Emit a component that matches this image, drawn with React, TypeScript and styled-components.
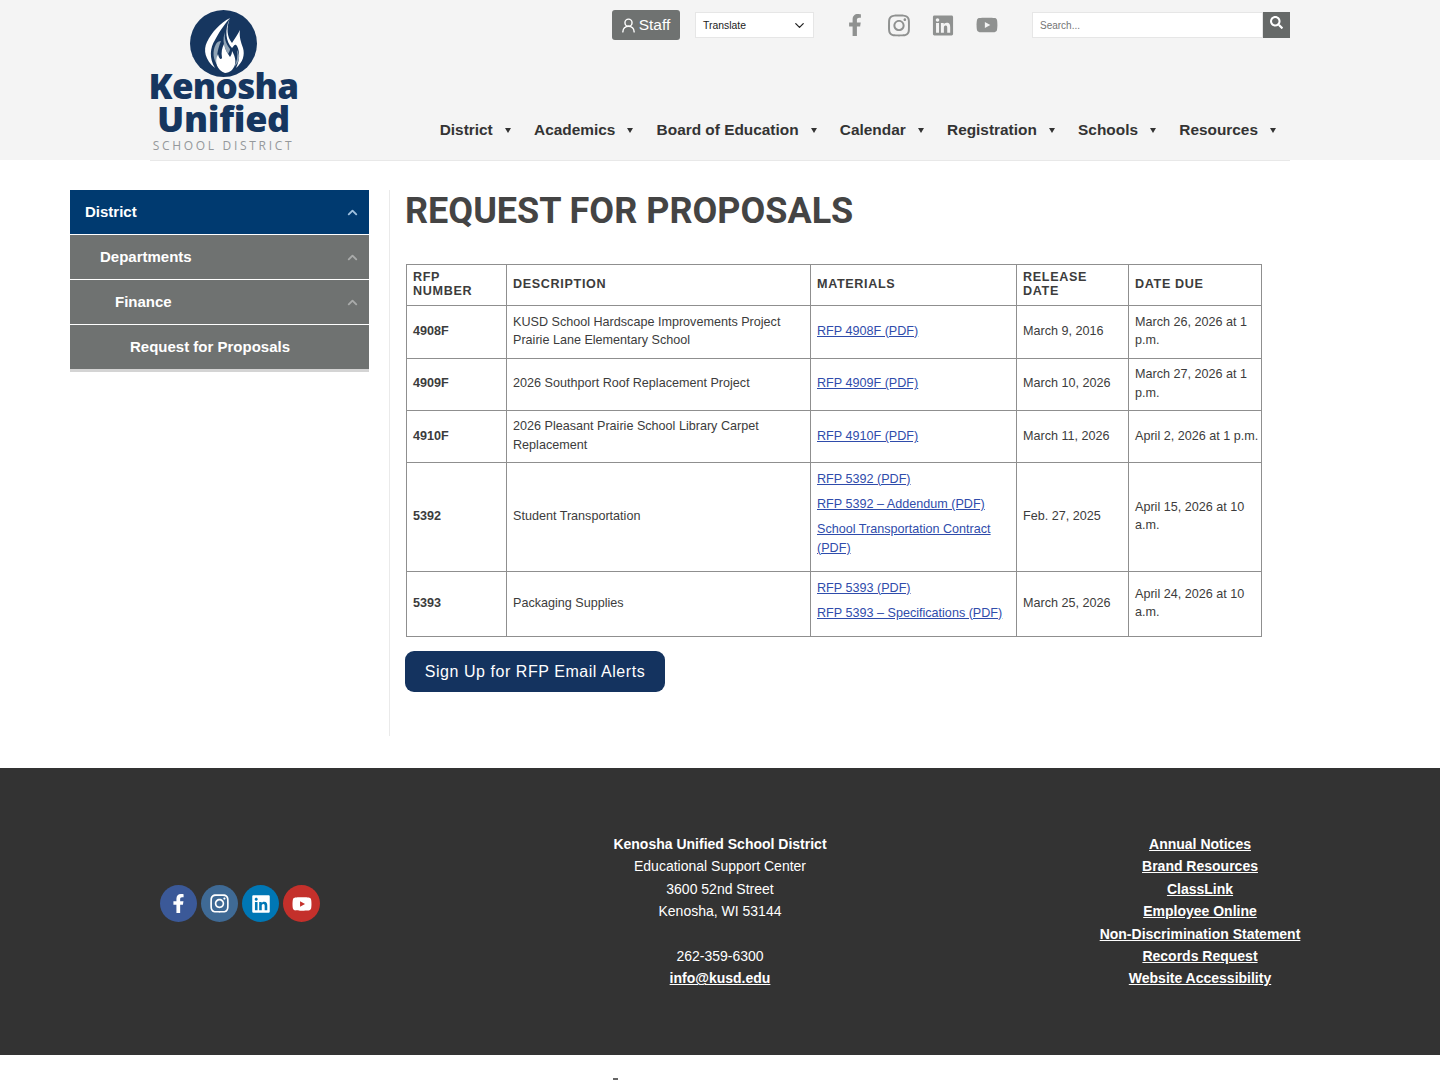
import React from "react";
import styled, {createGlobalStyle} from "styled-components";
import {FaFacebookF, FaInstagram, FaLinkedin, FaSearch, FaYoutube} from "react-icons/fa";
import {LuChevronDown, LuChevronUp, LuUserRound} from "react-icons/lu";

const GlobalStyle = createGlobalStyle`
    html, body {
        margin: 0;
        padding: 0;
        background: #fff;
        color: #333;
        font-family: "Liberation Sans", Arial, sans-serif;
    }
`;

const Page = styled.div`
    width: 1440px;
    height: 1080px;
    overflow: hidden;
`;

/* header */
const HeaderBand = styled.header`
    background: #f4f4f4;
    height: 160px;
`;

const HeaderInner = styled.div`
    width: 1140px;
    height: 161px;
    margin: 0 auto;
    display: flex;
    box-sizing: border-box;
    border-bottom: 1px solid #e8e8e8;
`;

const Logo = styled.a`
    width: 147px;
    flex: none;
    display: flex;
    flex-direction: column;
    align-items: center;
    padding-top: 10px;
    color: #16365f;
`;

const LogoWord = styled.span<{$size: number; $first?: boolean}>`
    font-family: "Open Sans", sans-serif;
    font-weight: 800;
    font-size: ${(p) => p.$size}px;
    line-height: 33px;
    letter-spacing: ${(p) => (p.$first ? "-0.7px" : "-0.3px")};
    white-space: nowrap;
    margin-top: ${(p) => (p.$first ? "-8px" : "0")};
`;

const LogoTag = styled.span`
    font-family: "Open Sans", sans-serif;
    font-size: 12px;
    line-height: 14px;
    letter-spacing: 2.7px;
    color: #94989b;
    white-space: nowrap;
    margin-top: 4px;
`;

const HeaderRight = styled.div`
    flex: 1;
    display: flex;
    flex-direction: column;
`;

const TopRow = styled.div`
    height: 30px;
    margin-top: 10px;
    display: flex;
    align-items: center;
    justify-content: flex-end;
`;

const StaffButton = styled.a`
    width: 68px;
    height: 30px;
    box-sizing: border-box;
    border-radius: 3px;
    background: #6f7271;
    color: #fff;
    font-size: 15.5px;
    display: flex;
    align-items: center;
    justify-content: center;
    gap: 2px;
    padding-right: 2px;
`;

const TranslateSelect = styled.div`
    width: 119px;
    height: 26px;
    margin-left: 15px;
    box-sizing: border-box;
    padding: 0 6px 0 7px;
    background: #fff;
    border: 1px solid #e6e6e6;
    font-size: 10.4px;
    color: #222;
    display: flex;
    align-items: center;
    justify-content: space-between;
`;

const SocialRow = styled.div`
    width: 218px;
    padding-right: 4px;
    box-sizing: border-box;
    display: flex;
    align-items: center;
    justify-content: center;
    gap: 22px;
    color: #8f9190;
`;

const SocialSlot = styled.span`
    width: 22px;
    display: flex;
    justify-content: center;
`;

const SearchBox = styled.div`
    width: 258px;
    height: 26px;
    display: flex;
    background: #fff;
`;

const SearchField = styled.div`
    flex: 1;
    box-sizing: border-box;
    border: 1px solid #e6e6e6;
    padding-left: 7px;
    font-size: 10px;
    color: #757575;
    display: flex;
    align-items: center;
`;

const SearchButton = styled.span`
    width: 27px;
    background: #666968;
    color: #fff;
    display: flex;
    justify-content: center;
    padding-top: 4px;
    box-sizing: border-box;
`;

const Nav = styled.nav`
    margin-top: 80px;
    display: flex;
    justify-content: flex-end;
    padding-right: 14px;
    gap: 23.3px;
`;

const NavItem = styled.a`
    font-size: 15.4px;
    line-height: 20px;
    font-weight: 700;
    color: #333;
    display: flex;
    align-items: center;
    gap: 12px;
    &::after {
        content: "";
        border-left: 3px solid transparent;
        border-right: 3px solid transparent;
        border-top: 5px solid #333;
    }
`;

/* main */
const Main = styled.main`
    height: 608px;
    box-sizing: border-box;
    padding: 30px 0 0 70px;
    display: flex;
`;

const Sidebar = styled.aside`
    width: 299px;
    flex: none;
    align-self: flex-start;
    border-bottom: 3px solid #d4d4d4;
`;

const SideItem = styled.a<{$level: number; $active?: boolean}>`
    height: 44px;
    box-sizing: border-box;
    padding: 0 9px 2px ${(p) => 15 + p.$level * 15}px;
    background: ${(p) => (p.$active ? "#003a70" : "#6f7271")};
    color: #fff;
    font-size: 15px;
    font-weight: 700;
    display: flex;
    align-items: center;
    justify-content: space-between;
    & + & {
        margin-top: 1px;
    }
    svg {
        color: ${(p) => (p.$active ? "#9fc0de" : "#a9abaa")};
        position: relative;
        top: 1px;
    }
`;

const Content = styled.div`
    margin-left: 20px;
    width: 900px;
    height: 546px;
    box-sizing: border-box;
    border-left: 1px solid #eaeaea;
    padding: 1px 0 0 15px;
`;

const Title = styled.h1`
    margin: 0;
    font-family: Roboto, sans-serif;
    font-size: 36px;
    line-height: 40px;
    font-weight: 700;
    color: #444;
`;

const Table = styled.table`
    margin: 33px 0 0 1px;
    width: 855px;
    table-layout: fixed;
    border-collapse: collapse;
    font-size: 12.6px;
    line-height: 18.5px;
    color: #3c3c3c;

    th, td {
        border: 1px solid #8f8f8f;
        padding: 0 0 2px 6px;
        text-align: left;
        vertical-align: middle;
    }

    th {
        letter-spacing: 0.65px;
        line-height: 14px;
        font-weight: 700;
    }

    a {
        color: #2f4cab;
        text-decoration: underline;
    }
`;

const Row = styled.tr<{$h: number; $low?: boolean}>`
    height: ${(p) => p.$h}px;
    ${(p) => p.$low && "td:not(:nth-child(2)) { padding-bottom: 0; }"}
`;

const LinksCell = styled.td`
    && {
        padding-bottom: 7px;
    }
`;

const LinkLine = styled.div`
    line-height: 19px;
    & + & {
        margin-top: 6px;
    }
`;

const SignUp = styled.a`
    margin-top: 14px;
    width: 260px;
    height: 41px;
    box-sizing: border-box;
    border-radius: 9px;
    background: #14335f;
    color: #fff;
    font-size: 16px;
    letter-spacing: 0.55px;
    display: flex;
    align-items: center;
    justify-content: center;
`;

/* footer */
const Footer = styled.footer`
    height: 287px;
    background: #333;
    color: #fff;
    display: grid;
    grid-template-columns: repeat(3, 480px);
    font-size: 14px;
    line-height: 22.4px;
    text-align: center;
`;

const FooterColumn = styled.div`
    padding-top: 65px;
    a {
        color: #fff;
        font-weight: 700;
        text-decoration: underline;
        display: block;
    }
`;

const FooterSocial = styled.div`
    display: flex;
    align-items: center;
    justify-content: center;
    gap: 4px;
    height: 271px;
`;

const Round = styled.a<{$bg: string}>`
    width: 37px;
    height: 37px;
    border-radius: 50%;
    background: ${(p) => p.$bg};
    display: flex;
    align-items: center;
    justify-content: center;
    color: #fff;
`;

const Strong = styled.div`
    font-weight: 700;
`;

const Gap = styled.div`
    height: 22.4px;
`;

const BottomMark = styled.div`
    width: 5px;
    height: 2px;
    margin: 23px 0 0 613px;
    background: #666;
`;

function Flame() {
    return (
        <svg width="67" height="67" viewBox="0 0 67 67" aria-hidden="true">
            <circle cx="33.5" cy="33.5" r="33.5" fill="#16365f"/>
            <path d="M40 8C30 13 22 22 17 32 13 40 15 50 25 58 19 48 20 38 25 30 28 24 33 16 40 8Z" fill="#fff"/>
            <path d="M40 8C36 18 37 27 42 33 45 28 48 24 50 20 49 27 51 32 53 38 55 45 53 52 46 58 50 50 50 42 47 36 45 33 44 36 42 38 36 32 34 20 40 8Z" fill="#fff"/>
            <path d="M26 34C22 41 23 50 28 56 26 48 27 41 31 31 29 31 27 32 26 34Z" fill="#8fa3b5"/>
            <path d="M35 22C32 30 34 37 38 44 39 42 40 41 40 39 36 34 34 28 35 22Z" fill="#8fa3b5"/>
            <path d="M47 40C48 46 47 52 44 57 49 53 51 46 47 40Z" fill="#8fa3b5"/>
            <path d="M35 63C27 60 24 52 28 44 29 49 31 50 32 48 31 42 32 38 34 34 35 40 38 44 40 47 41 45 42 44 42 41 46 48 47 54 42 60 40 62 37 63 35 63Z" fill="#fff"/>
        </svg>
    );
}

export default function App() {
    return (
        <Page>
            <GlobalStyle/>
            <HeaderBand>
                <HeaderInner>
                    <Logo>
                        <Flame/>
                        <LogoWord $size={35} $first>Kenosha</LogoWord>
                        <LogoWord $size={36}>Unified</LogoWord>
                        <LogoTag>SCHOOL DISTRICT</LogoTag>
                    </Logo>
                    <HeaderRight>
                        <TopRow>
                            <StaffButton><LuUserRound size={17}/>Staff</StaffButton>
                            <TranslateSelect>Translate<LuChevronDown size={15}/></TranslateSelect>
                            <SocialRow>
                                <SocialSlot><FaFacebookF size={22}/></SocialSlot>
                                <SocialSlot><FaInstagram size={25}/></SocialSlot>
                                <SocialSlot><FaLinkedin size={23}/></SocialSlot>
                                <SocialSlot><FaYoutube size={24}/></SocialSlot>
                            </SocialRow>
                            <SearchBox>
                                <SearchField>Search...</SearchField>
                                <SearchButton><FaSearch size={13}/></SearchButton>
                            </SearchBox>
                        </TopRow>
                        <Nav>
                            {["District", "Academics", "Board of Education", "Calendar", "Registration", "Schools", "Resources"].map((n) => (
                                <NavItem key={n}>{n}</NavItem>
                            ))}
                        </Nav>
                    </HeaderRight>
                </HeaderInner>
            </HeaderBand>
            <Main>
                <Sidebar>
                    <SideItem $level={0} $active>District<LuChevronUp size={15} strokeWidth={3}/></SideItem>
                    <SideItem $level={1}>Departments<LuChevronUp size={15} strokeWidth={3}/></SideItem>
                    <SideItem $level={2}>Finance<LuChevronUp size={15} strokeWidth={3}/></SideItem>
                    <SideItem $level={3}>Request for Proposals</SideItem>
                </Sidebar>
                <Content>
                    <Title>REQUEST FOR PROPOSALS</Title>
                    <Table>
                        <colgroup>
                            <col style={{width: 100}}/>
                            <col style={{width: 304}}/>
                            <col style={{width: 206}}/>
                            <col style={{width: 112}}/>
                            <col style={{width: 133}}/>
                        </colgroup>
                        <thead>
                            <Row $h={41}>
                                <th>RFP<br/>NUMBER</th>
                                <th>DESCRIPTION</th>
                                <th>MATERIALS</th>
                                <th>RELEASE<br/>DATE</th>
                                <th>DATE DUE</th>
                            </Row>
                        </thead>
                        <tbody>
                            <Row $h={53}>
                                <td><b>4908F</b></td>
                                <td>KUSD School Hardscape Improvements Project<br/>Prairie Lane Elementary School</td>
                                <td><a>RFP 4908F (PDF)</a></td>
                                <td>March 9, 2016</td>
                                <td>March 26, 2026 at 1 p.m.</td>
                            </Row>
                            <Row $h={52}>
                                <td><b>4909F</b></td>
                                <td>2026 Southport Roof Replacement Project</td>
                                <td><a>RFP 4909F (PDF)</a></td>
                                <td>March 10, 2026</td>
                                <td>March 27, 2026 at 1 p.m.</td>
                            </Row>
                            <Row $h={52} $low>
                                <td><b>4910F</b></td>
                                <td>2026 Pleasant Prairie School Library Carpet Replacement</td>
                                <td><a>RFP 4910F (PDF)</a></td>
                                <td>March 11, 2026</td>
                                <td>April 2, 2026 at 1 p.m.</td>
                            </Row>
                            <Row $h={109}>
                                <td><b>5392</b></td>
                                <td>Student Transportation</td>
                                <LinksCell>
                                    <LinkLine><a>RFP 5392 (PDF)</a></LinkLine>
                                    <LinkLine><a>RFP 5392 – Addendum (PDF)</a></LinkLine>
                                    <LinkLine><a>School Transportation Contract (PDF)</a></LinkLine>
                                </LinksCell>
                                <td>Feb. 27, 2025</td>
                                <td>April 15, 2026 at 10 a.m.</td>
                            </Row>
                            <Row $h={65}>
                                <td><b>5393</b></td>
                                <td>Packaging Supplies</td>
                                <LinksCell>
                                    <LinkLine><a>RFP 5393 (PDF)</a></LinkLine>
                                    <LinkLine><a>RFP 5393 – Specifications (PDF)</a></LinkLine>
                                </LinksCell>
                                <td>March 25, 2026</td>
                                <td>April 24, 2026 at 10 a.m.</td>
                            </Row>
                        </tbody>
                    </Table>
                    <SignUp>Sign Up for RFP Email Alerts</SignUp>
                </Content>
            </Main>
            <Footer>
                <FooterSocial>
                    <Round $bg="#3b5998"><FaFacebookF size={19}/></Round>
                    <Round $bg="#3f6a95"><FaInstagram size={21}/></Round>
                    <Round $bg="#0077b5"><FaLinkedin size={20}/></Round>
                    <Round $bg="#c4302b"><FaYoutube size={20}/></Round>
                </FooterSocial>
                <FooterColumn>
                    <Strong>Kenosha Unified School District</Strong>
                    <div>Educational Support Center</div>
                    <div>3600 52nd Street</div>
                    <div>Kenosha, WI 53144</div>
                    <Gap/>
                    <div>262-359-6300</div>
                    <a>info@kusd.edu</a>
                </FooterColumn>
                <FooterColumn>
                    <a>Annual Notices</a>
                    <a>Brand Resources</a>
                    <a>ClassLink</a>
                    <a>Employee Online</a>
                    <a>Non-Discrimination Statement</a>
                    <a>Records Request</a>
                    <a>Website Accessibility</a>
                </FooterColumn>
            </Footer>
            <BottomMark/>
        </Page>
    );
}
